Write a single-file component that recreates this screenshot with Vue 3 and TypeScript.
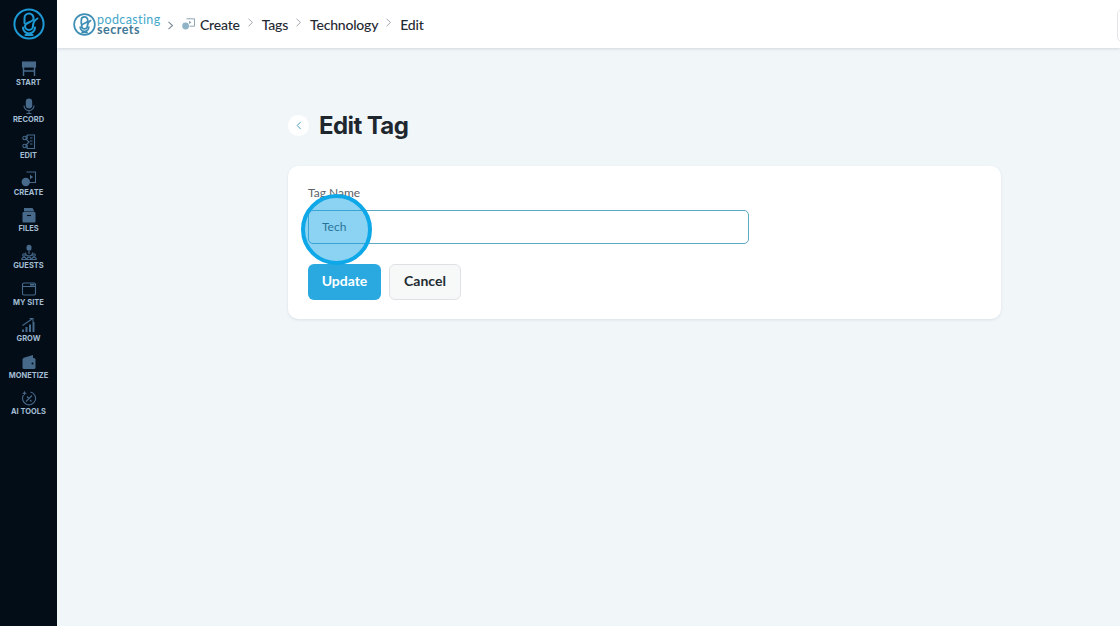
<script setup lang="ts">
const navItems = [
  { label: 'START', icon: 'start' },
  { label: 'RECORD', icon: 'record' },
  { label: 'EDIT', icon: 'edit' },
  { label: 'CREATE', icon: 'create' },
  { label: 'FILES', icon: 'files' },
  { label: 'GUESTS', icon: 'guests' },
  { label: 'MY SITE', icon: 'site' },
  { label: 'GROW', icon: 'grow' },
  { label: 'MONETIZE', icon: 'monetize' },
  { label: 'AI TOOLS', icon: 'tools' }
]

const crumbs = ['Tags', 'Technology', 'Edit']
</script>

<template>
  <div class="page">
    <aside class="sidebar">
      <svg class="brand" width="32" height="32" viewBox="0 0 32 32" fill="none" stroke="#1d9ad6" stroke-width="2" stroke-linecap="round">
        <circle cx="16" cy="16" r="14.6" />
        <path d="M11.5 15V10a4.500 4.500 0 0 1 9 0v1.500c-2 3-8.500 3-8.500 6.500a4 4 0 0 0 8 0c0-3 2-6 4.500-7.500" />
        <path d="M10 19.500a6 6 0 0 0 12 0M16 25.500v1.500M12.500 27h7" />
      </svg>
      <nav class="nav">
        <a v-for="item in navItems" :key="item.label" class="nav-item" href="#">
          <svg width="16" height="16" viewBox="0 0 16 16" fill="none" stroke="#47698a" stroke-width="1.1">
            <template v-if="item.icon === 'start'">
              <rect x="1.500" y="1" width="13" height="5" fill="#47698a" />
              <path d="M2.500 6v9M13.500 6v9M2.500 10h11" stroke-width="1.500" />
            </template>
            <template v-else-if="item.icon === 'record'">
              <rect x="4.800" y="0.500" width="6.400" height="10" rx="3.200" fill="#47698a" stroke="none" />
              <path d="M3 7.500a5 5 0 0 0 10 0M8 12.500v3M5.500 15.500h5" />
            </template>
            <template v-else-if="item.icon === 'edit'">
              <path d="M6 1h7.500v13.500H6M9 4h2.500M9 7h2.500M9 10h2.500" />
              <path d="M6 1v4M6 11v3.500" stroke-width="1.400" />
              <circle cx="3.500" cy="4" r="1.700" />
              <circle cx="3.500" cy="12" r="1.700" />
              <path d="M5 5l3 3-3 3" />
            </template>
            <template v-else-if="item.icon === 'create'">
              <path d="M6 1.500 V1h8.500v10.500H9" />
              <path d="M9 3.800l3.200 2.200L9 8.200z" fill="#47698a" stroke="none" />
              <circle cx="4.800" cy="11" r="4.200" fill="#47698a" stroke="none" />
            </template>
            <template v-else-if="item.icon === 'files'">
              <path d="M3 1h8.500l2 3.500H3z" fill="#47698a" stroke="none" />
              <rect x="1.500" y="5" width="13" height="10.500" rx="1" fill="#47698a" stroke="none" />
              <path d="M6 8.500h4" stroke="#020d18" />
            </template>
            <template v-else-if="item.icon === 'guests'">
              <rect x="5.500" y="0.800" width="5" height="6" rx="2.500" fill="#47698a" stroke="none" />
              <path d="M8 7v3M4.500 8.500a3.500 3.500 0 0 0 7 0" />
              <circle cx="3" cy="11" r="1.300" />
              <circle cx="13" cy="11" r="1.300" />
              <path d="M0.800 15.500c0-3 4.400-3 4.400 0zM10.800 15.500c0-3 4.400-3 4.400 0zM6 15.500c0-3 4-3 4 0z" />
            </template>
            <template v-else-if="item.icon === 'site'">
              <rect x="1.500" y="2" width="13" height="12" rx="1.500" />
              <path d="M1.500 5.500h13" />
              <path d="M9 3.700h4.500" stroke-width="1.800" />
            </template>
            <template v-else-if="item.icon === 'grow'">
              <path d="M2 15v-2.500M5.500 15v-5M9 15V7.500M12.500 15V5" stroke-width="2" />
              <path d="M1.500 8.500L11 2M8.500 1.500H12V5" />
            </template>
            <template v-else-if="item.icon === 'monetize'">
              <path d="M2 4l10-3v3z" fill="#47698a" stroke="none" />
              <rect x="1.500" y="4" width="13" height="11" rx="1.500" fill="#47698a" stroke="none" />
              <circle cx="11.500" cy="9.500" r="1" fill="#020d18" stroke="none" />
            </template>
            <template v-else>
              <path d="M9.500 2a6.500 6.500 0 1 1-7 3" />
              <path d="M3.500 0.800l.7 1.700 1.700.7-1.700.7-.7 1.700-.7-1.700-1.700-.7 1.700-.7z" fill="#47698a" stroke="none" />
              <path d="M5 11.500l6-6M6 6.500l1.500 1.500M9 10l1.500 1.500" />
            </template>
          </svg>
          <span>{{ item.label }}</span>
        </a>
      </nav>
    </aside>

    <div class="body">
      <header class="topbar">
        <div class="wordmark">
          <svg width="23" height="23" viewBox="0 0 32 32" fill="none" stroke="#3f8fb5" stroke-width="2.400" stroke-linecap="round">
            <circle cx="16" cy="16" r="14.400" />
            <path d="M11.500 15V10a4.500 4.500 0 0 1 9 0v1.500c-2 3-8.500 3-8.500 6.500a4 4 0 0 0 8 0c0-3 2-6 4.500-7.500" />
            <path d="M10 19.500a6 6 0 0 0 12 0M16 25.500v1.500M12.500 27h7" />
          </svg>
          <div class="wordmark-text">
            <span class="wm-top">podcasting</span>
            <span class="wm-bottom">secrets</span>
          </div>
        </div>
        <svg class="chev first" width="7" height="9" viewBox="0 0 7 9" fill="none" stroke="#7f8a93" stroke-width="1.100"><path d="M1.500 .8L5.500 4.500 1.500 8.200" /></svg>
        <svg class="create-icon" width="13" height="12" viewBox="0 0 13 12" fill="none" stroke="#8fa6b5" stroke-width="1">
          <path d="M4.500 .8h8v7.400H7.500" />
          <path d="M7 2.800l2.500 1.600L7 6z" fill="#8fa6b5" stroke="none" />
          <circle cx="3.600" cy="8" r="3.400" fill="#8fb4c8" stroke="none" />
        </svg>
        <span class="crumb">Create</span>
        <template v-for="c in crumbs" :key="c">
          <svg class="chev" width="7" height="9" viewBox="0 0 7 9" fill="none" stroke="#a4acb2" stroke-width="1"><path d="M1.500 .8L5.500 4.500 1.500 8.200" /></svg>
          <span class="crumb">{{ c }}</span>
        </template>
        <div class="top-action"></div>
      </header>

      <main class="content">
        <div class="title-row">
          <button class="back" type="button">
            <svg width="6" height="9" viewBox="0 0 6 9" fill="none" stroke="#4f9fc0" stroke-width="1"><path d="M4.800 .8L1.200 4.500l3.600 3.700" /></svg>
          </button>
          <h1>Edit Tag</h1>
        </div>

        <section class="card">
          <label class="field-label">Tag Name</label>
          <div class="input-wrap">
            <input class="input" type="text" value="Tech" />
            <div class="spot"></div>
          </div>
          <div class="actions">
            <button class="btn primary" type="button">Update</button>
            <button class="btn ghost" type="button">Cancel</button>
          </div>
        </section>
      </main>
    </div>
  </div>
</template>

<style scoped>
.page {
  display: flex;
  width: 1120px;
  height: 626px;
  overflow: hidden;
  background: #f1f6f9;
  font-family: Lato, "Noto Sans", sans-serif;
}

.sidebar {
  width: 57px;
  flex: none;
  background: #020d18;
  display: flex;
  flex-direction: column;
  align-items: center;
}

.brand {
  margin-top: 8px;
}

.nav {
  margin-top: 21px;
  display: flex;
  flex-direction: column;
  width: 100%;
}

.nav-item {
  height: 36.6px;
  display: flex;
  flex-direction: column;
  align-items: center;
  text-decoration: none;
  color: #a3bdd3;
  font-family: Inter, sans-serif;
  font-size: 7.5px;
  font-weight: 700;
  line-height: 9px;
  gap: 1px;
  white-space: nowrap;
}

.body {
  flex: 1;
  display: flex;
  flex-direction: column;
  min-width: 0;
}

.topbar {
  height: 48px;
  flex: none;
  background: #fff;
  box-shadow: 0 1px 3px rgba(60, 80, 100, 0.18);
  display: flex;
  align-items: center;
  padding-left: 16px;
  position: relative;
}

.wordmark {
  display: flex;
  align-items: center;
  gap: 1px;
}

.wordmark-text {
  display: flex;
  flex-direction: column;
  line-height: 10px;
  margin-top: 1px;
  width: 63px;
}

.wm-top {
  font-size: 12.5px;
  color: #45a7c9;
  letter-spacing: 0.4px;
}

.wm-bottom {
  font-size: 12.5px;
  font-weight: 700;
  color: #3f7896;
  letter-spacing: 0.5px;
}

.chev {
  margin: 0 8px 0 7px;
  flex: none;
  position: relative;
  top: -2px;
}

.chev.first {
  margin: 2px 8px 0 7px;
  top: 0;
}

.create-icon {
  margin-right: 5px;
}

.crumb {
  font-size: 14px;
  font-weight: 500;
  letter-spacing: -0.2px;
  color: #1f2a33;
}

.top-action {
  position: absolute;
  left: 1060px;
  top: 9px;
  width: 40px;
  height: 31px;
  border: 1px solid #e4e7ea;
  border-radius: 5px;
}

.content {
  flex: 1;
  padding: 61px 0 0 231px;
}

.title-row {
  display: flex;
  align-items: center;
  gap: 10px;
  height: 32px;
}

.back {
  width: 21px;
  height: 21px;
  border: none;
  border-radius: 50%;
  background: #fff;
  padding: 0;
  display: flex;
  align-items: center;
  justify-content: center;
}

h1 {
  margin: 0;
  font-family: Inter, sans-serif;
  font-size: 24px;
  font-weight: 700;
  letter-spacing: -0.6px;
  color: #1f272e;
}

.card {
  margin-top: 25px;
  width: 713px;
  height: 153px;
  box-sizing: border-box;
  background: #fff;
  border-radius: 10px;
  box-shadow: 0 1px 3px rgba(60, 80, 100, 0.12);
  padding: 19px 20px 20px;
}

.field-label {
  display: block;
  font-size: 12px;
  line-height: 15px;
  color: #5a6269;
}

.input-wrap {
  position: relative;
  margin-top: 10px;
  width: 441px;
}

.input {
  display: block;
  width: 100%;
  height: 34px;
  box-sizing: border-box;
  border: 1px solid #5ea9c4;
  border-radius: 5px;
  padding: 0 13px 2px;
  font: 400 12px Lato, "Noto Sans", sans-serif;
  color: #3f4a52;
  background: #fff;
  outline: none;
}

.spot {
  position: absolute;
  left: -7px;
  top: -16px;
  width: 71px;
  height: 71px;
  box-sizing: border-box;
  border-radius: 50%;
  border: 4px solid #0ea8e8;
  background: rgba(14, 160, 228, 0.48);
}

.actions {
  display: flex;
  gap: 8px;
  margin-top: 20px;
}

.btn {
  height: 36px;
  border-radius: 6px;
  font: 700 14px Lato, "Noto Sans", sans-serif;
  padding: 0 0 4px;
}

.primary {
  width: 73px;
  border: none;
  background: #29a9e0;
  color: #fff;
}

.ghost {
  width: 72px;
  border: 1px solid #dfe2e4;
  background: #f7f8f8;
  color: #222b32;
}
</style>
